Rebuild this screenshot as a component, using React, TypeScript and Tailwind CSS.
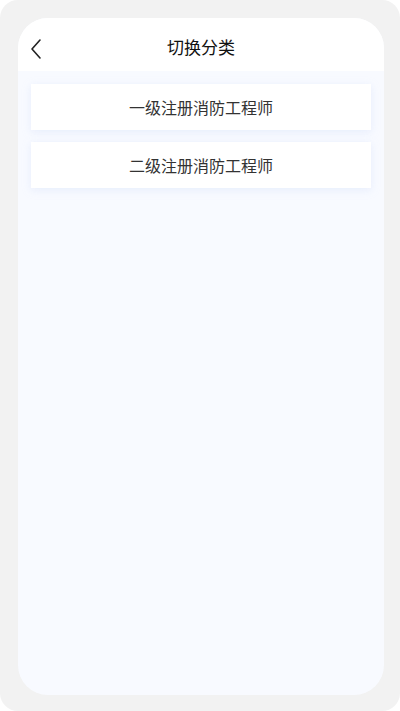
import { useState } from "react";

const categories = ["一级注册消防工程师", "二级注册消防工程师"];

export default function App() {
  const [active, setActive] = useState<string | null>(null);

  return (
    <div
      className="h-[711px] w-[400px] bg-white"
      style={{ fontFamily: '"Noto Sans CJK SC", "Noto Sans", sans-serif' }}
    >
      <div className="flex h-full flex-col rounded-[18px] bg-[#f2f2f2] pb-[16px] pl-[18px] pr-[16px] pt-[18px]">
        <div className="flex flex-1 flex-col overflow-hidden rounded-[30px] bg-[#f8faff]">
          {/* header */}
          <div className="relative flex h-[53px] items-center justify-center bg-white">
            <button type="button" className="absolute left-[8px] top-[16px] p-1">
              <svg width="12" height="22" viewBox="0 0 12 22" fill="none">
                <path d="M10 2 L2 11 L10 20" stroke="#222" strokeWidth="1.6" strokeLinecap="round" strokeLinejoin="round" />
              </svg>
            </button>
            <h1 className="mt-[5px] text-[17px] text-[#111]">切换分类</h1>
          </div>

          {/* list */}
          <div className="flex flex-col gap-[12px] px-[13px] pt-[13px]">
            {categories.map((name) => (
              <button
                key={name}
                type="button"
                onClick={() => setActive(name)}
                className={
                  "flex h-[46px] items-center justify-center bg-white text-[16px] shadow-[0_2px_8px_rgba(200,215,245,0.35)] " +
                  (active === name ? "text-[#1a73e8]" : "text-[#333]")
                }
              >
                {name}
              </button>
            ))}
          </div>
        </div>
      </div>
    </div>
  );
}
